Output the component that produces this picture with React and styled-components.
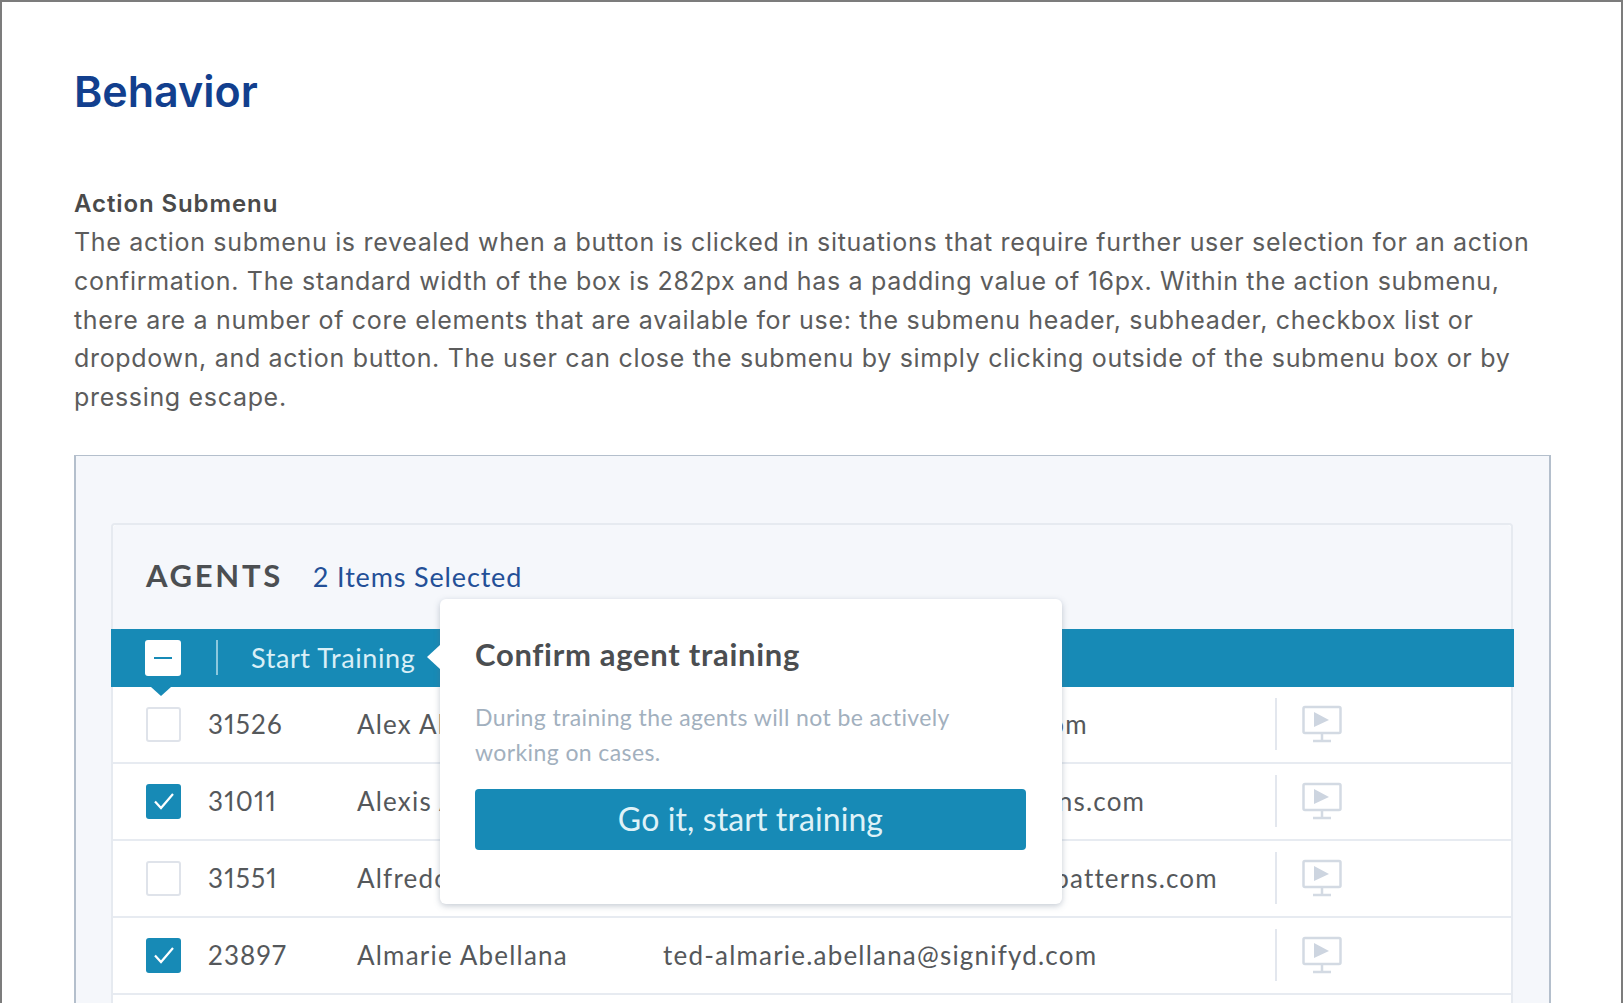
import React from "react";
import styled, { createGlobalStyle } from "styled-components";

const GlobalStyle = createGlobalStyle`
  html, body { margin: 0; padding: 0; height: 100%; overflow: hidden; background: #fff; }
`;

const BLUE = "#178ab6";

const agents = [
  { id: "31526", name: "Alex Abbott", email: "alex.abbott-agents1@signifyd.com", checked: false },
  { id: "31011", name: "Alexis Aaron", email: "alexis.aaron-agents@darkpatterns.com", checked: true },
  { id: "31551", name: "Alfredo Abad", email: "alfredo.abadiano-agents1@darkpatterns.com", checked: false },
  { id: "23897", name: "Almarie Abellana", email: "ted-almarie.abellana@signifyd.com", checked: true },
];

function TrainIcon() {
  return (
    <svg width="40" height="38" viewBox="0 0 40 38" fill="none">
      <rect x="1.5" y="2" width="37" height="26" rx="1.5" stroke="#d3dae3" strokeWidth="2.5" />
      <path d="M12 7 L27 15 L12 22 Z" fill="#cdd5e0" />
      <path d="M20 28 V35 M11 36 H29" stroke="#d3dae3" strokeWidth="2.5" />
    </svg>
  );
}

function Check() {
  return (
    <svg width="22" height="18" viewBox="0 0 22 18" fill="none">
      <path d="M2 9.5 L8 16 L20 2" stroke="#fff" strokeWidth="2.2" />
    </svg>
  );
}

export default function App() {
  return (
    <Page>
      <GlobalStyle />
      <Title>Behavior</Title>
      <SubTitle>Action Submenu</SubTitle>
      <Body>
        The action submenu is revealed when a button is clicked in situations that require further user selection for an action<br />
        confirmation. The standard width of the box is 282px and has a padding value of 16px. Within the action submenu,<br />
        there are a number of core elements that are available for use: the submenu header, subheader, checkbox list or<br />
        dropdown, and action button. The user can close the submenu by simply clicking outside of the submenu box or by<br />
        pressing escape.
      </Body>
      <Panel>
        <Card>
          <CardHead>
            <CardTitle>AGENTS</CardTitle>
            <Selected>2 Items Selected</Selected>
          </CardHead>
          <ActionBar>
            <MasterBox />
            <Divider />
            <ActionLabel>Start Training</ActionLabel>
          </ActionBar>
          {agents.map((a) => (
            <Row key={a.id}>
              <Box $checked={a.checked}>{a.checked && <Check />}</Box>
              <AgentId>{a.id}</AgentId>
              <AgentName>{a.name}</AgentName>
              <AgentEmail>{a.email}</AgentEmail>
              <RowAction>
                <TrainIcon />
              </RowAction>
            </Row>
          ))}
          <Row />
          <Popover>
            <PopTitle>Confirm agent training</PopTitle>
            <PopText>
              During training the agents will not be actively<br />
              working on cases.
            </PopText>
            <PopButton>Go it, start training</PopButton>
          </Popover>
        </Card>
      </Panel>
    </Page>
  );
}

const Page = styled.div`
  box-sizing: border-box;
  height: 1003px;
  overflow: hidden;
  padding: 64px 72px 0 72px;
  border-top: 2px solid #7c7c7c;
  border-left: 2px solid #7c7c7c;
  border-right: 2px solid #7c7c7c;
  background: #fff;
`;

const Title = styled.h1`
  margin: 0;
  font: 600 43px/50px Inter, sans-serif;
  letter-spacing: 0;
  color: #123f8e;
`;

const SubTitle = styled.div`
  margin-top: 68px;
  font: 600 24px/39px Inter, sans-serif;
  letter-spacing: 0.9px;
  color: #4a4a4a;
`;

const Body = styled.p`
  margin: 0;
  font: 400 25px/38.8px Inter, sans-serif;
  letter-spacing: 0.68px;
  color: #5c5c5c;
  white-space: nowrap;
`;

const Panel = styled.div`
  box-sizing: border-box;
  width: 1477px;
  margin-top: 38px;
  padding: 67px 36px 0 35px;
  height: 600px;
  background: #f5f7fb;
  border: 2px solid #b4bfcc;
  border-top-width: 1px;
  border-bottom: 0;
`;

const Card = styled.div`
  position: relative;
  background: #fff;
  border: 2px solid #e6eaf0;
  border-radius: 4px;
  height: 600px;
`;

const CardHead = styled.div`
  display: flex;
  align-items: baseline;
  gap: 30px;
  height: 104px;
  box-sizing: border-box;
  padding: 30px 0 0 33px;
  background: #f5f7fb;
  border-radius: 4px 4px 0 0;
`;

const CardTitle = styled.div`
  font: 700 31px/40px Lato, sans-serif;
  letter-spacing: 2.7px;
  color: #4c4f52;
`;

const Selected = styled.div`
  font: 400 27px/40px Lato, sans-serif;
  letter-spacing: 0.85px;
  color: #234f97;
`;

const ActionBar = styled.div`
  position: relative;
  display: flex;
  align-items: center;
  height: 58px;
  margin: 0 -3px 0 -2px;
  padding-left: 34px;
  background: ${BLUE};
  &::after {
    content: "";
    position: absolute;
    left: 40px;
    bottom: -9px;
    border-left: 10px solid transparent;
    border-right: 10px solid transparent;
    border-top: 9px solid ${BLUE};
  }
`;

const MasterBox = styled.span`
  position: relative;
  display: block;
  width: 36px;
  height: 36px;
  background: #fff;
  border-radius: 3px;
  &::after {
    content: "";
    position: absolute;
    left: 9px;
    right: 9px;
    top: 17px;
    height: 2px;
    background: ${BLUE};
  }
`;

const Divider = styled.span`
  display: block;
  width: 2px;
  height: 35px;
  margin-left: 35px;
  background: #8cc8de;
`;

const ActionLabel = styled.span`
  margin-left: 33px;
  font: 400 27px/40px Lato, sans-serif;
  letter-spacing: 0.6px;
  color: #d9eff7;
`;

const Row = styled.div`
  display: flex;
  align-items: center;
  height: 77px;
  box-sizing: border-box;
  padding-left: 33px;
  border-bottom: 2px solid #e7ebf1;
  font: 400 26px/36px Lato, sans-serif;
  letter-spacing: 1.2px;
  font-variant-numeric: proportional-nums;
  color: #55585b;
`;

const Box = styled.span`
  display: flex;
  align-items: center;
  justify-content: center;
  box-sizing: border-box;
  width: 35px;
  height: 35px;
  flex: none;
  border-radius: 3px;
  border: ${(p) => (p.$checked ? "0" : "2px solid #dfe3ea")};
  background: ${(p) => (p.$checked ? BLUE : "#fff")};
`;

const AgentId = styled.span`
  width: 149px;
  flex: none;
  margin-left: 27px;
`;

const AgentName = styled.span`
  width: 306px;
  flex: none;
`;

const AgentEmail = styled.span`
  width: 612px;
  flex: none;
`;

const RowAction = styled.span`
  display: flex;
  align-items: center;
  height: 52px;
  padding-left: 25px;
  border-left: 2px solid #e3e7ee;
`;

const Popover = styled.div`
  position: absolute;
  left: 327px;
  top: 74px;
  box-sizing: border-box;
  width: 622px;
  height: 305px;
  padding: 35px 36px 0 35px;
  background: #fff;
  border-radius: 6px;
  box-shadow: 0 2px 6px rgba(90, 105, 130, 0.35);
  &::before {
    content: "";
    position: absolute;
    left: -13px;
    top: 46px;
    border-top: 12px solid transparent;
    border-bottom: 12px solid transparent;
    border-right: 13px solid #fff;
  }
`;

const PopTitle = styled.div`
  font: 700 31px/40px Lato, sans-serif;
  letter-spacing: 0.7px;
  color: #4b4e51;
`;

const PopText = styled.div`
  margin-top: 26px;
  font: 400 23px/35px Lato, sans-serif;
  letter-spacing: 0.4px;
  color: #a2b0be;
`;

const PopButton = styled.div`
  display: flex;
  align-items: center;
  justify-content: center;
  height: 61px;
  margin-top: 19px;
  border-radius: 4px;
  background: ${BLUE};
  font: 400 32px/40px Lato, sans-serif;
  letter-spacing: 0.1px;
  color: #dff2f8;
`;
